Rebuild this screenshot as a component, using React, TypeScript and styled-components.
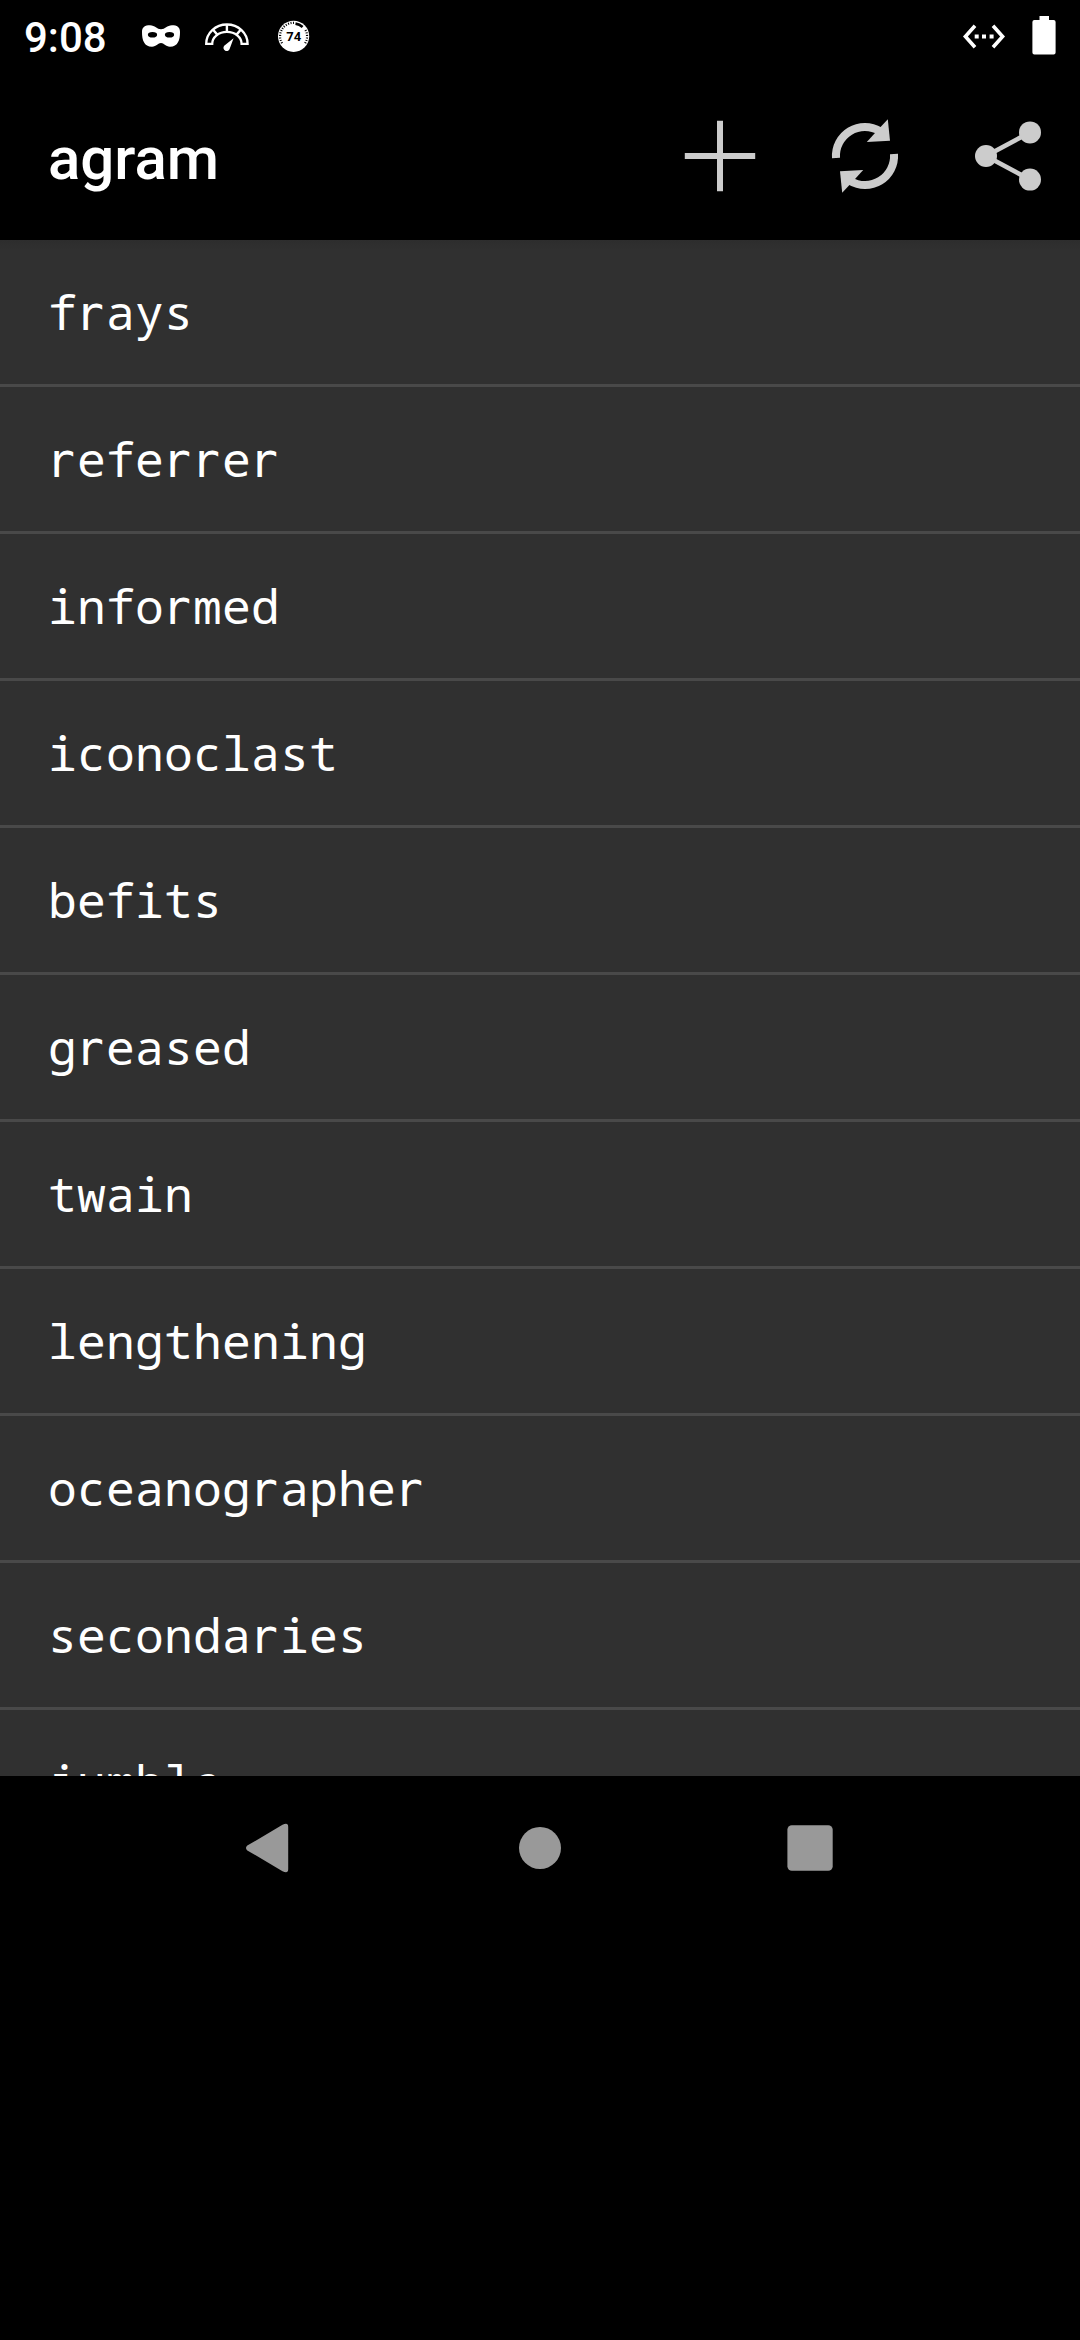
import React from "react";
import styled, { createGlobalStyle } from "styled-components";

const GlobalStyle = createGlobalStyle`
  body { margin: 0; background: #000; }
  * { box-sizing: border-box; }
`;

const Screen = styled.div`
  display: flex;
  flex-direction: column;
  width: 1080px;
  height: 2340px;
  background: #000;
  color: #fff;
  font-family: Roboto, sans-serif;
  overflow: hidden;
`;

const StatusBar = styled.header`
  display: flex;
  align-items: center;
  justify-content: space-between;
  height: 72px;
  padding: 0 21px 0 24px;
`;

const StatusGroup = styled.div<{ $gap: number }>`
  display: flex;
  align-items: center;
  gap: ${(p) => p.$gap}px;
`;

const Clock = styled.time`
  width: 95px;
  font-size: 42px;
  font-weight: 500;
  line-height: 75px;
  padding-top: 3px;
`;

const AppBar = styled.div`
  display: flex;
  align-items: center;
  justify-content: space-between;
  height: 168px;
  padding-left: 48px;
`;

const Title = styled.h1`
  margin: 5px 0 0;
  font-size: 60px;
  font-weight: 500;
  line-height: 71px;
`;

const Actions = styled.div`
  display: flex;
`;

const IconButton = styled.button`
  display: flex;
  width: 144px;
  height: 144px;
  padding: 0;
  border: 0;
  background: none;
  color: #ccc;
`;

const WordList = styled.ul`
  height: 1536px;
  margin: 0;
  padding: 0;
  overflow: hidden;
  list-style: none;
  background: linear-gradient(#2d2d2d, #303030 10px);
`;

const WordRow = styled.li`
  height: 147px;
  padding: 0 48px;
  border-bottom: 3px solid #494949;
  font-family: "Noto Sans Mono", "DejaVu Sans Mono", monospace;
  font-size: 48px;
  letter-spacing: 0.2px;
  line-height: 144px;
  white-space: nowrap;
`;

const PlainR = styled.span`
  margin: 0 2px 0 -2px;
  font-family: "DejaVu Sans Mono", monospace;
  line-height: 1;
  letter-spacing: 0.1px;
`;

const NavBar = styled.nav`
  display: flex;
  justify-content: center;
  height: 144px;
`;

const NavButton = styled.button`
  display: flex;
  align-items: center;
  justify-content: center;
  width: 270px;
  padding: 0;
  border: 0;
  background: none;
  color: #999;
`;

const words = [
  "frays",
  "referrer",
  "informed",
  "iconoclast",
  "befits",
  "greased",
  "twain",
  "lengthening",
  "oceanographer",
  "secondaries",
  "jumble",
];

// The list face has a slab-footed "r"; this swaps in one without the foot.
const Word = ({ text }: { text: string }) => (
  <>{text.split(/(r)/).map((part, i) => (part === "r" ? <PlainR key={i}>r</PlainR> : part))}</>
);

const MaskIcon = () => (
  <svg width="48" height="48" viewBox="0 0 48 48">
    <path
      fill="#fff"
      d="M5 20C5 15 8 13.300 13 13.300 18 13.300 20 17.300 24 17.300S30 13.300 35 13.300C40 13.300 43 15 43 20 43 28 41 34.700 33 34.700 28.500 34.700 27 31 24 31S19.500 34.700 15 34.700C7 34.700 5 28 5 20z"
    />
    <ellipse cx="15.500" cy="22.800" rx="4.600" ry="2.800" />
    <ellipse cx="32.500" cy="22.800" rx="4.600" ry="2.800" />
  </svg>
);

const GaugeIcon = () => (
  <svg width="48" height="48" viewBox="0 0 48 48" fill="none" stroke="#fff">
    <path strokeWidth="2.300" d="M3.200 31.900A20.700 19.400 0 0 1 44.600 31.900H38.600A14.700 12 0 0 0 9.200 31.900z" />
    <path strokeWidth="2.400" d="M23.900 12.500v7.500M10.300 18l4.600 5.400M37.500 18l-4.600 5.400" />
    <path fill="#fff" stroke="none" d="M30.600 26.300 26.800 36.400a3.200 3.200 0 1 1-5.600-2.600z" />
  </svg>
);

const ScoreIcon = () => (
  <svg width="48" height="48" viewBox="0 0 48 48">
    <circle cx="24.600" cy="24.300" r="15.600" fill="#fff" />
    <path fill="none" stroke="#000" strokeWidth="2.200" strokeDasharray="1 1.500" d="M13 31.200A13.500 13.500 0 0 1 25 10.800M36.200 31.200A13.500 13.500 0 0 0 36 17.200" />
    <path fill="none" stroke="#000" strokeWidth="2.600" d="M26.500 11.600A13 13 0 0 1 33.600 15" />
    <text x="24.700" y="29.200" textAnchor="middle" fontFamily="Roboto, sans-serif" fontSize="13" fontWeight="700">
      74
    </text>
  </svg>
);

const EthernetIcon = () => (
  <svg width="46" height="48" viewBox="0 0 46 48">
    <path fill="none" stroke="#fff" strokeWidth="3.600" d="M14 13.700 4.400 24.500 14 35.300M32 13.700l9.600 10.800L32 35.300" />
    <path fill="#fff" d="M13.700 22.500h4v4h-4zM21 22.500h4v4h-4zM28.600 22.500h4v4h-4z" />
  </svg>
);

const BatteryIcon = () => (
  <svg width="30" height="48" viewBox="0 0 30 48">
    <path fill="#fff" d="M10.500 4h9.500v4h4.600q2 0 2 2v30.600q0 2-2 2H5.400q-2 0-2-2V10q0-2 2-2h5.100z" />
  </svg>
);

const PlusIcon = () => (
  <svg width="144" height="144" viewBox="-72 -72 144 144">
    <path stroke="currentColor" strokeWidth="6" d="M-35.200 0h70.400M0-35.200v70.400" />
  </svg>
);

const RefreshIcon = () => (
  <svg width="144" height="144" viewBox="-73 -72 144 144">
    {[0, 180].map((angle) => (
      <g key={angle} transform={`rotate(${angle})`}>
        <path fill="none" stroke="currentColor" strokeWidth="8" d="M-29 2A29 29 0 0 1 15-24.800" />
        <path fill="currentColor" d="M22.800-36.700 25-15.200 1.800-14 10-23z" />
      </g>
    ))}
  </svg>
);

const ShareIcon = () => (
  <svg width="144" height="144" viewBox="-72 -72 144 144">
    <path fill="none" stroke="currentColor" strokeWidth="4.600" d="M22-23.600-22 0l44 23.600" />
    <g fill="currentColor">
      <circle cx="-22" cy="0" r="11" />
      <circle cx="22" cy="-23.600" r="11" />
      <circle cx="22" cy="23.600" r="11" />
    </g>
  </svg>
);

const BackIcon = () => (
  <svg width="60" height="60" viewBox="0 0 60 60">
    <path fill="currentColor" d="M7.300 27.600 42.500 6.800q5.700-2.800 5.700 2v42.400q0 4.800-5.700 2L7.300 32.400q-2.600-2.400 0-4.800z" />
  </svg>
);

const HomeIcon = () => (
  <svg width="60" height="60" viewBox="0 0 60 60">
    <circle cx="30" cy="30" r="21" fill="currentColor" />
  </svg>
);

const RecentsIcon = () => (
  <svg width="60" height="60" viewBox="0 0 60 60">
    <rect x="7.400" y="7.300" width="45.300" height="45.400" rx="4.500" fill="currentColor" />
  </svg>
);

export default function App() {
  return (
    <Screen>
      <GlobalStyle />
      <StatusBar>
        <StatusGroup $gap={18}>
          <Clock>9:08</Clock>
          <MaskIcon />
          <GaugeIcon />
          <ScoreIcon />
        </StatusGroup>
        <StatusGroup $gap={22}>
          <EthernetIcon />
          <BatteryIcon />
        </StatusGroup>
      </StatusBar>
      <AppBar>
        <Title>agram</Title>
        <Actions>
          <IconButton aria-label="Add"><PlusIcon /></IconButton>
          <IconButton aria-label="Refresh"><RefreshIcon /></IconButton>
          <IconButton aria-label="Share"><ShareIcon /></IconButton>
        </Actions>
      </AppBar>
      <WordList>
        {words.map((word) => (
          <WordRow key={word}><Word text={word} /></WordRow>
        ))}
      </WordList>
      <NavBar>
        <NavButton aria-label="Back"><BackIcon /></NavButton>
        <NavButton aria-label="Home"><HomeIcon /></NavButton>
        <NavButton aria-label="Recent apps"><RecentsIcon /></NavButton>
      </NavBar>
    </Screen>
  );
}
